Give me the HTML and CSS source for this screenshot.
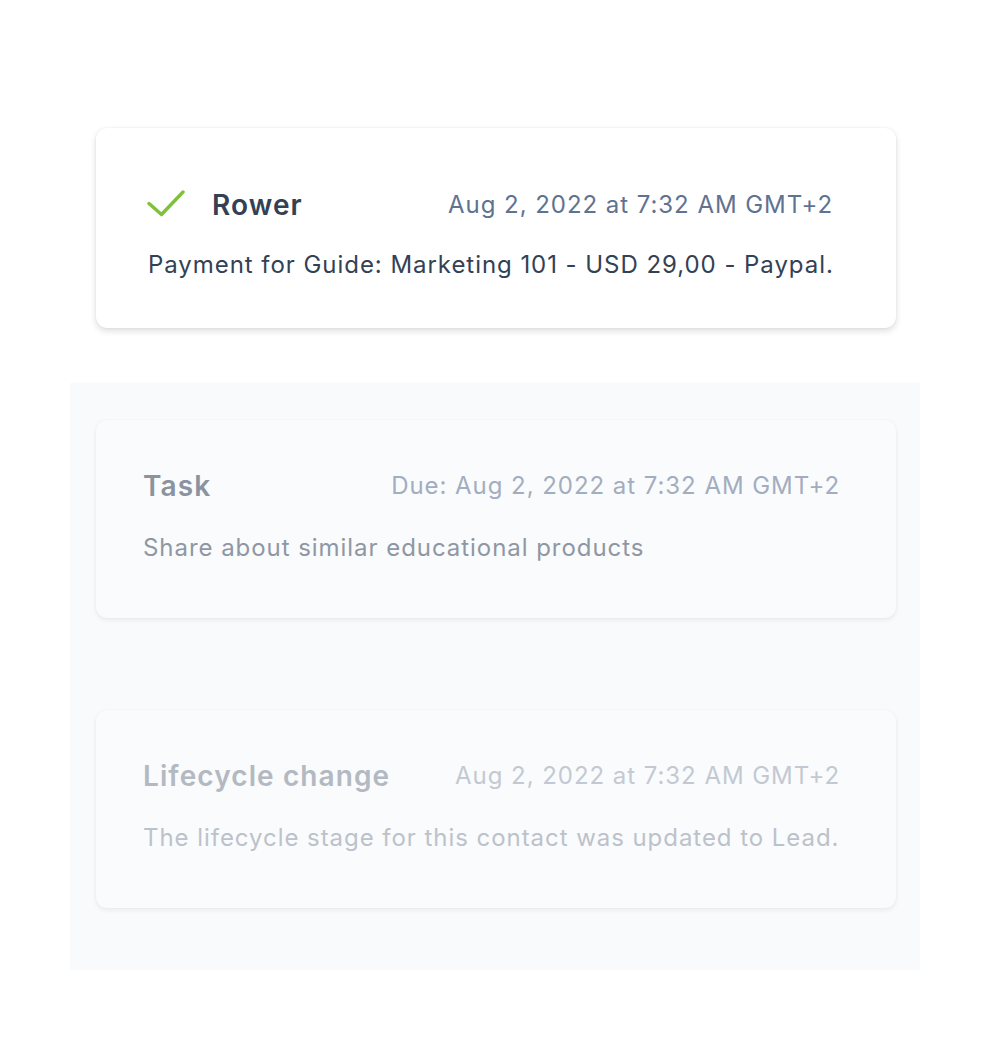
FILE: index.html
```html
<!DOCTYPE html>
<html lang="en">
<head>
<meta charset="utf-8">
<title>Timeline</title>
<link rel="stylesheet" href="styles.css">
</head>
<body>
<div class="page">
  <div class="card card-main">
    <div class="row">
      <div class="lead">
        <svg class="check" width="38" height="28" viewBox="0 0 38 28" aria-hidden="true">
          <path d="M2 13.5 L14.5 24.5 L36 2" fill="none" stroke="#7fc13a" stroke-width="3.4" stroke-linecap="round" stroke-linejoin="round"/>
        </svg>
        <span class="title">Rower</span>
      </div>
      <span class="date">Aug 2, 2022 at 7:32 AM GMT+2</span>
    </div>
    <p class="body">Payment for Guide: Marketing 101 - USD 29,00 - Paypal.</p>
  </div>

  <div class="panel">
    <div class="card card-faded card-task">
      <div class="row">
        <span class="title">Task</span>
        <span class="date">Due: Aug 2, 2022 at 7:32 AM GMT+2</span>
      </div>
      <p class="body">Share about similar educational products</p>
    </div>
    <div class="card card-faded card-life">
      <div class="row">
        <span class="title">Lifecycle change</span>
        <span class="date">Aug 2, 2022 at 7:32 AM GMT+2</span>
      </div>
      <p class="body">The lifecycle stage for this contact was updated to Lead.</p>
    </div>
  </div>
</div>
</body>
</html>
```

FILE: styles.css
```css
* { box-sizing: border-box; }
html, body { margin: 0; padding: 0; background: #ffffff; }
body {
  font-family: Inter, "Noto Sans", sans-serif;
  width: 1000px;
  height: 1040px;
}
.page {
  padding-top: 128px;
  display: flex;
  flex-direction: column;
  align-items: flex-start;
}
.card {
  width: 800px;
  border-radius: 11px;
  display: flex;
  flex-direction: column;
}
.card-main {
  margin-left: 96px;
  background: #ffffff;
  height: 200px;
  padding: 59px 63px 0 51px;
  box-shadow: 0 3px 6px rgba(15, 23, 42, 0.14), 0 0 2px rgba(15, 23, 42, 0.08);
}
.row {
  display: flex;
  align-items: center;
  justify-content: space-between;
  height: 36px;
}
.lead {
  display: flex;
  align-items: center;
  gap: 27px;
}
.check { display: block; margin-top: -2px; }
.title {
  font-size: 28px;
  font-weight: 600;
  letter-spacing: 1.1px;
  line-height: 36px;
  white-space: nowrap;
}
.date {
  font-size: 24px;
  font-weight: 400;
  letter-spacing: 0.95px;
  line-height: 36px;
  white-space: nowrap;
}
.body {
  margin: 0;
  font-size: 24px;
  line-height: 32px;
  letter-spacing: 0.95px;
  white-space: nowrap;
}
.card-main .title { color: #334155; }
.card-main .date { color: #5f7290; }
.card-main .body { color: #334155; margin-top: 26px; padding-left: 1px; }

.panel {
  margin-top: 55px;
  margin-left: 70px;
  width: 850px;
  background: #f9fafb;
  padding: 37px 24px 62px 26px;
  display: flex;
  flex-direction: column;
  gap: 92px;
}
.card-faded {
  background: #fafbfc;
  height: 198px;
  padding: 48px 56px 0 47px;
  box-shadow: 0 2px 5px rgba(15, 23, 42, 0.07), 0 0 2px rgba(15, 23, 42, 0.04);
}
.card-faded .body { margin-top: 28px; }
.card-task .title { color: #8a939f; }
.card-task .date { color: #a2adbf; }
.card-task .body { color: #8e97a3; }
.card-life .title { color: #b3b9c2; }
.card-life .date { color: #c3c9d3; }
.card-life .body { color: #bcc2cb; }
```
